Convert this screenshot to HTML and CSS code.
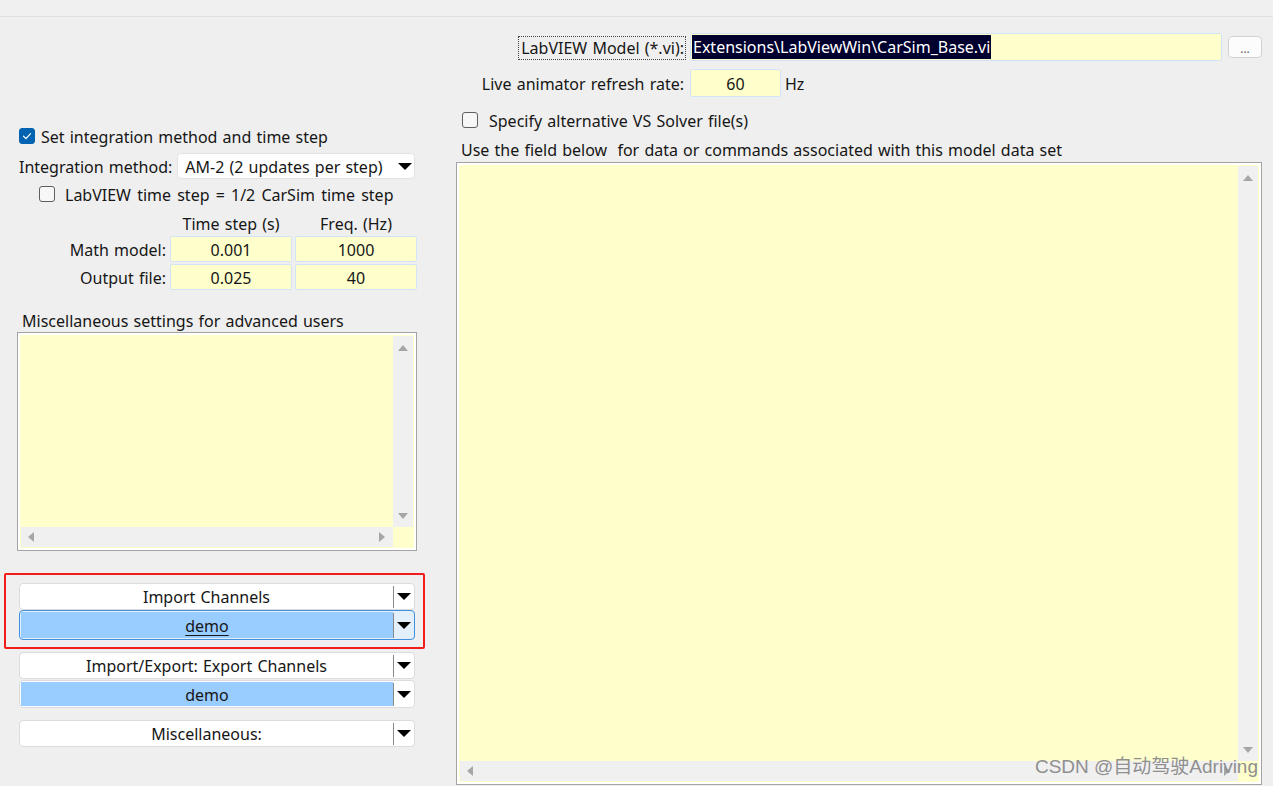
FILE: index.html
```html
<!DOCTYPE html>
<html>
<head>
<meta charset="utf-8">
<title>LabVIEW Model</title>
<link rel="stylesheet" href="styles.css">
</head>
<body>
<div class="app">
  <div class="topbar"></div>
  <div class="main">
    <div class="left">
      <div class="row row-a">
        <span class="cb cb-on"><svg width="14" height="14" viewBox="0 0 14 14"><polyline points="3.5,7.2 6,9.6 10.5,4.6" fill="none" stroke="#ffffff" stroke-width="1.2" stroke-linecap="round" stroke-linejoin="round"/></svg></span>
        <span class="lbl">Set integration method and time step</span>
      </div>
      <div class="row row-b">
        <span class="lbl">Integration method:</span>
        <div class="select"><span class="select-text">AM-2 (2 updates per step)</span><span class="arrow"></span></div>
      </div>
      <div class="row row-c">
        <span class="cb"></span>
        <span class="lbl lbl-c">LabVIEW time step = 1/2 CarSim time step</span>
      </div>
      <div class="grid">
        <span></span><span class="hdr">Time step (s)</span><span class="hdr">Freq. (Hz)</span>
        <span class="rl">Math model:</span><span class="fld">0.001</span><span class="fld">1000</span>
        <span class="rl">Output file:</span><span class="fld">0.025</span><span class="fld">40</span>
      </div>
      <div class="row row-g"><span class="lbl">Miscellaneous settings for advanced users</span></div>
      <div class="ta ta-small">
        <div class="ta-in">
          <div class="ta-body"></div>
          <div class="vs"><span class="ar-up"></span><span class="ar-dn"></span></div>
          <div class="hs"><span class="ar-lt"></span><span class="ar-rt"></span></div>
          <div class="corner"></div>
        </div>
      </div>
      <div class="redbox">
        <div class="dd"><div class="dd-main">Import Channels</div><div class="dd-btn"><span class="arrow"></span></div></div>
        <div class="dd dd-blue dd-focus"><div class="dd-main"><span class="ul">demo</span></div><div class="dd-btn"><span class="arrow"></span></div></div>
      </div>
      <div class="dd dd-export"><div class="dd-main">Import/Export: Export Channels</div><div class="dd-btn"><span class="arrow"></span></div></div>
      <div class="dd dd-blue dd-demo2"><div class="dd-main">demo</div><div class="dd-btn"><span class="arrow"></span></div></div>
      <div class="dd dd-misc"><div class="dd-main">Miscellaneous:</div><div class="dd-btn"><span class="arrow"></span></div></div>
    </div>
    <div class="right">
      <div class="rrow rrow-1">
        <div class="rlabel"><span class="focusbtn">LabVIEW Model (*.vi):</span></div>
        <div class="path"><span class="sel">Extensions\LabViewWin\CarSim_Base.vi</span></div>
        <div class="dots">...</div>
      </div>
      <div class="rrow rrow-2">
        <div class="rlabel">Live animator refresh rate:</div>
        <div class="rate">60</div>
        <span class="hz">Hz</span>
      </div>
      <div class="row row-3">
        <span class="cb"></span>
        <span class="lbl">Specify alternative VS Solver file(s)</span>
      </div>
      <div class="row row-4"><span class="lbl pre">Use the field below  for data or commands associated with this model data set</span></div>
      <div class="ta ta-big">
        <div class="ta-in">
          <div class="ta-body"></div>
          <div class="vs"><span class="ar-up"></span><span class="ar-dn"></span></div>
          <div class="hs"><span class="ar-lt"></span><span class="ar-rt"></span></div>
          <div class="corner"></div>
        </div>
      </div>
    </div>
  </div>
  <div class="watermark">CSDN @自动驾驶Adriving</div>
</div>
</body>
</html>
```

FILE: styles.css
```css
* { box-sizing: border-box; }
html, body {
  margin: 0;
  padding: 0;
}
body {
  background: #efefef;
  font-family: "Noto Sans", "Open Sans", sans-serif;
  font-size: 16px;
  word-spacing: 1px;
  color: #161616;
  width: 1273px;
  height: 786px;
  overflow: hidden;
}
.app {
  position: relative;
  width: 1273px;
  height: 786px;
}
.topbar {
  height: 17px;
  border-bottom: 1px solid #e0e0e0;
  background: #f0f0f0;
}
.main {
  display: flex;
}
.left {
  width: 440px;
  padding-top: 109px;
}
.right {
  flex: 1;
  padding-top: 16px;
  padding-left: 16px;
}
.row {
  display: flex;
  align-items: center;
  white-space: nowrap;
}
.lbl { line-height: 20px; padding-top: 1px; }
.pre { white-space: pre; }

/* checkboxes */
.cb {
  width: 16px;
  height: 16px;
  border: 1px solid #5f5f5f;
  border-radius: 3px;
  background: #f7f7f7;
  display: inline-flex;
  align-items: center;
  justify-content: center;
  flex: none;
}
.cb-on {
  background: #0063b1;
  border-color: #0063b1;
}

.row-a {
  height: 20px;
  padding-left: 19px;
  gap: 6px;
}
.row-b {
  height: 26px;
  margin-top: 7px;
  padding-left: 19px;
  gap: 5px;
}
.select {
  width: 238px;
  height: 26px;
  background: #ffffff;
  border: 1px solid #e2e2e2;
  border-radius: 4px;
  display: flex;
  align-items: center;
  padding-left: 7px;
  padding-right: 2px;
}
.select-text { flex: 1; padding-top: 1px; }
.arrow {
  width: 0;
  height: 0;
  border-left: 7px solid transparent;
  border-right: 7px solid transparent;
  border-top: 7px solid #000000;
}
.row-c {
  height: 20px;
  margin-top: 5px;
  padding-left: 39px;
  gap: 10px;
}
.lbl-c { word-spacing: 2px; }

.grid {
  margin-top: 9px;
  display: grid;
  grid-template-columns: 167px 122px 122px;
  grid-template-rows: 21px 26px 26px;
  column-gap: 3px;
  row-gap: 2px;
}
.hdr {
  text-align: center;
  line-height: 20px;
  padding-top: 1px;
}
.rl {
  text-align: right;
  padding-right: 1px;
  line-height: 26px;
  padding-top: 1px;
}
.fld {
  background: #ffffcc;
  border: 1px solid #d3e5f5;
  border-radius: 2px;
  text-align: center;
  line-height: 24px;
  padding-top: 1px;
}

.row-g {
  height: 20px;
  margin-top: 20px;
  padding-left: 22px;
}

/* text areas */
.ta {
  border: 1px solid #a3a3a3;
  background: #ffffff;
  padding: 2px;
}
.ta-in {
  height: 100%;
  background: #ffffcc;
  padding: 1px;
  display: grid;
  grid-template-columns: 1fr 20px;
  grid-template-rows: 1fr 20px;
}
.vs {
  background: #f0f0f0;
  display: flex;
  flex-direction: column;
  align-items: center;
  justify-content: space-between;
  padding: 9px 0 8px;
}
.hs {
  background: #f0f0f0;
  display: flex;
  align-items: center;
  justify-content: space-between;
  padding: 0 8px 0 7px;
}
.corner { background: #ffffcc; }
.ar-up, .ar-dn, .ar-lt, .ar-rt { width: 0; height: 0; }
.ar-up {
  border-left: 5px solid transparent;
  border-right: 5px solid transparent;
  border-bottom: 6px solid #a6a6a6;
}
.ar-dn {
  border-left: 5px solid transparent;
  border-right: 5px solid transparent;
  border-top: 6px solid #a6a6a6;
}
.ar-lt {
  border-top: 5px solid transparent;
  border-bottom: 5px solid transparent;
  border-right: 6px solid #a6a6a6;
}
.ar-rt {
  border-top: 5px solid transparent;
  border-bottom: 5px solid transparent;
  border-left: 6px solid #a6a6a6;
}
.ta-small {
  margin-top: 2px;
  margin-left: 17px;
  width: 400px;
  height: 219px;
}
.ta-big {
  margin-top: 3px;
  width: 806px;
  height: 623px;
}

/* dropdowns */
.redbox {
  margin-top: 22px;
  margin-left: 4px;
  width: 421px;
  height: 76px;
  border: 2px solid #f21c1c;
  border-radius: 2px;
  padding: 8px 0 0 13px;
}
.dd {
  width: 396px;
  height: 27px;
  display: flex;
  background: #ffffff;
  border: 1px solid #dcdcdc;
  border-radius: 4px;
}
.dd-main {
  flex: 1;
  display: flex;
  align-items: center;
  justify-content: center;
  white-space: nowrap;
  padding-top: 1px;
}
.dd-btn {
  position: relative;
  width: 21px;
  display: flex;
  align-items: center;
  justify-content: center;
  padding-left: 1px;
}
.dd-btn::before {
  content: "";
  position: absolute;
  left: 0;
  top: 2px;
  bottom: 1px;
  width: 1px;
  background: #8a8a8a;
}
.dd-blue .dd-main {
  background: #99ccff;
  margin: 1px 0 1px 1px;
}
.dd-focus {
  height: 30px;
  border-color: #3f8fdc;
  background: #e3effa;
}
.ul { text-decoration: underline; text-underline-offset: 3px; }
.dd-export {
  margin-top: 3px;
  margin-left: 19px;
}
.dd-demo2 {
  margin-top: 1px;
  margin-left: 19px;
  height: 28px;
}
.dd-misc {
  margin-top: 12px;
  margin-left: 19px;
}

/* right column */
.rrow {
  display: flex;
  align-items: center;
  height: 28px;
  white-space: nowrap;
}
.rlabel {
  width: 230px;
  flex: none;
  text-align: right;
  padding-right: 2px;
  padding-top: 1px;
}
.focusbtn {
  display: inline-block;
  border: 1px dotted #444;
  padding: 0 1px 0 2px;
  line-height: 22px;
  margin-right: -2px;
}
.path {
  margin-left: 4px;
  width: 532px;
  height: 28px;
  background: #ffffcc;
  border: 1px solid #cfe3f6;
  border-radius: 2px;
  padding: 1px;
  word-spacing: 0;
}
.sel {
  display: inline-block;
  height: 24px;
  line-height: 25px;
  background: #00002e;
  color: #ffffff;
  padding: 0 1px;
}
.dots {
  margin-left: 6px;
  width: 34px;
  height: 22px;
  border: 1px solid #d2d2d2;
  border-radius: 4px;
  background: #fcfcfc;
  color: #666;
  font-size: 12px;
  text-align: center;
  line-height: 24px;
}
.rrow-2 { margin-top: 8px; }
.rate {
  margin-left: 4px;
  width: 91px;
  height: 28px;
  background: #ffffcc;
  border: 1px solid #d3e5f5;
  border-radius: 2px;
  text-align: center;
  line-height: 26px;
  padding-top: 1px;
}
.hz { margin-left: 4px; padding-top: 1px; }
.row-3 {
  height: 20px;
  margin-top: 13px;
  padding-left: 6px;
  gap: 11px;
}
.row-4 {
  height: 20px;
  margin-top: 9px;
  padding-left: 5px;
}

.watermark {
  position: absolute;
  right: 15px;
  bottom: 8px;
  font-family: "Liberation Sans", "Noto Sans CJK SC", sans-serif;
  font-size: 19px;
  word-spacing: 0;
  color: #8f8f8f;
  white-space: nowrap;
}
```
